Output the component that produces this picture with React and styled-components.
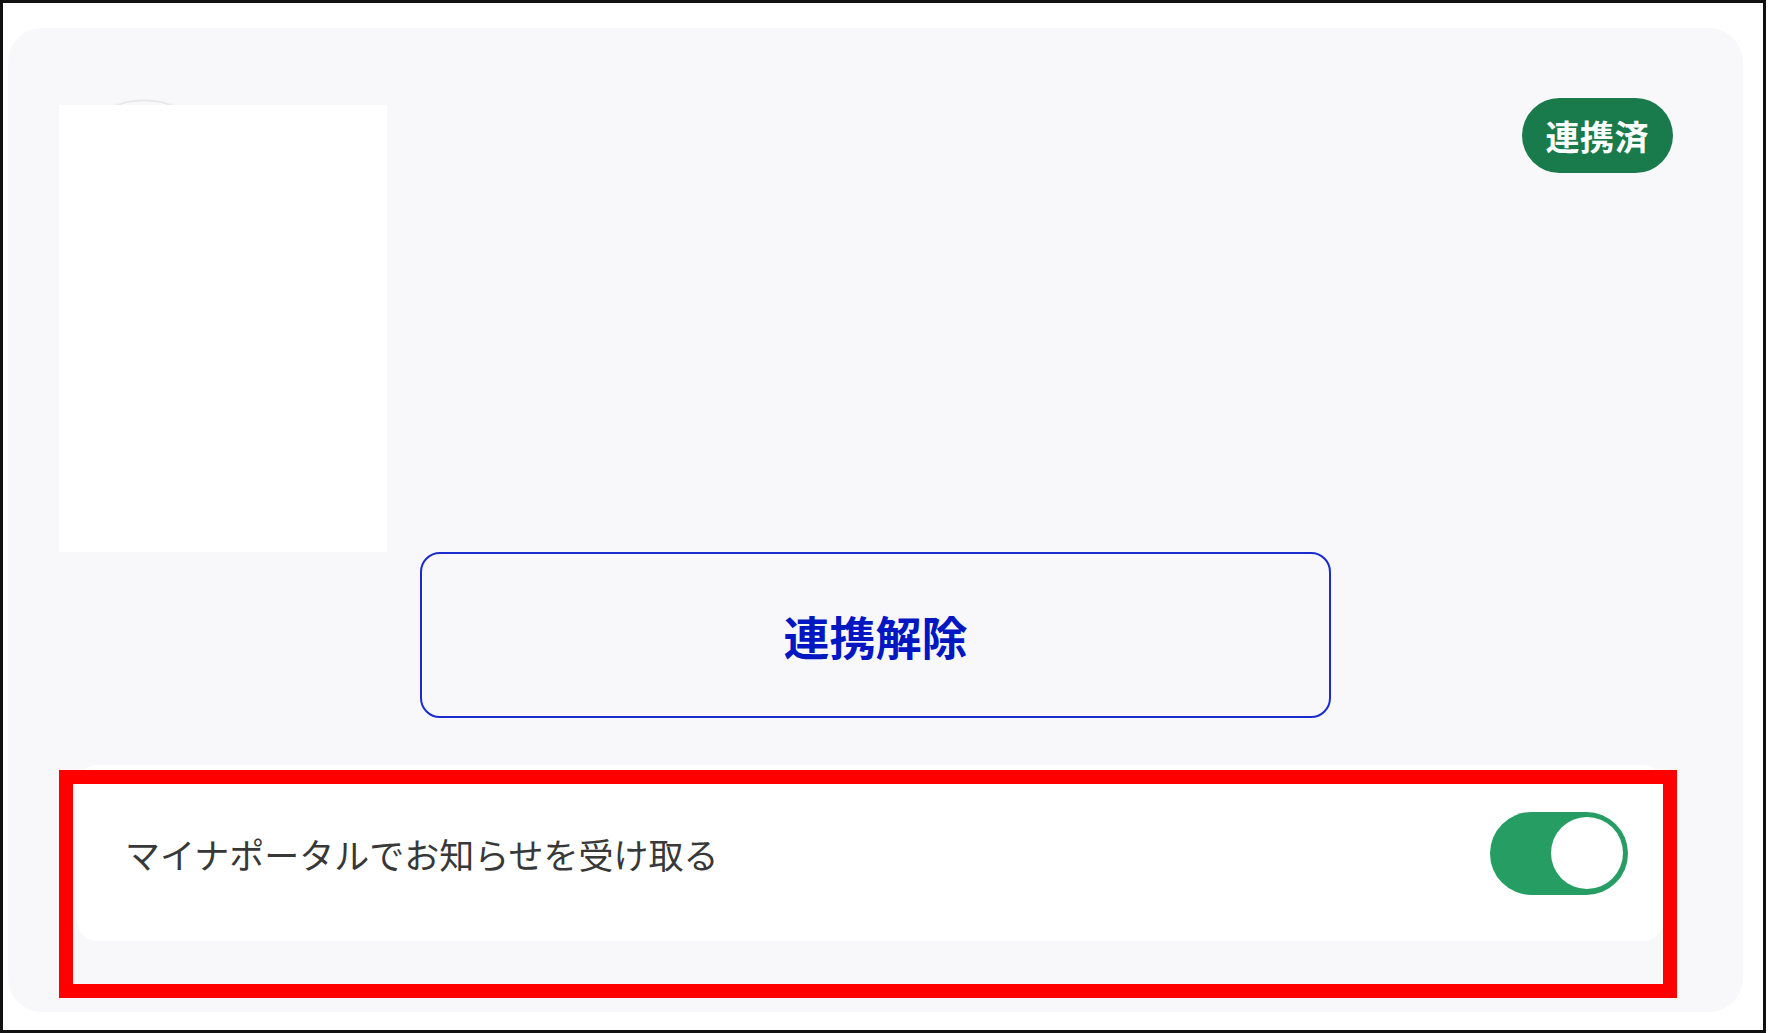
import styled, { createGlobalStyle } from 'styled-components'

const GlobalStyle = createGlobalStyle`
  html, body {
    margin: 0;
    padding: 0;
    background: #fff;
  }
  body {
    font-family: "Noto Sans CJK JP", "Noto Sans", sans-serif;
  }
`

function Toggle({ on }) {
  return (
    <ToggleTrack $on={on} role="switch" aria-checked={on}>
      <ToggleKnob $on={on} />
    </ToggleTrack>
  )
}

function App() {
  return (
    <>
      <GlobalStyle />
      <Frame>
        <Card>
          <Header>
            <Photo>
              <AvatarRing />
              <Redaction />
            </Photo>
            <Badge>連携済</Badge>
          </Header>
          <UnlinkButton type="button">連携解除</UnlinkButton>
          <SettingRow>
            <SettingLabel>マイナポータルでお知らせを受け取る</SettingLabel>
            <Toggle on />
          </SettingRow>
          <Highlight />
        </Card>
      </Frame>
    </>
  )
}

const Frame = styled.div`
  box-sizing: border-box;
  width: 1766px;
  height: 1033px;
  border: 3px solid #111;
  padding: 25px 20px 17px 5px;
`

const Card = styled.section`
  position: relative;
  box-sizing: border-box;
  height: 984px;
  background: #f8f8fb;
  border-radius: 34px;
  padding: 70px 0 71px;
  display: flex;
  flex-direction: column;
`

const Header = styled.div`
  display: flex;
  justify-content: space-between;
  align-items: flex-start;
  padding: 0 70px 0 51px;
`

const Photo = styled.div`
  position: relative;
  width: 328px;
  height: 447px;
  margin-top: 7px;
`

const AvatarRing = styled.div`
  position: absolute;
  left: 5px;
  top: -4px;
  width: 160px;
  height: 160px;
  border-radius: 50%;
  background: #f8f8fb;
  box-shadow: 0 0 3px rgba(0, 0, 0, 0.22);
`

const Redaction = styled.div`
  position: absolute;
  inset: 0;
  background: #fff;
`

const Badge = styled.span`
  display: inline-flex;
  align-items: center;
  justify-content: center;
  height: 75px;
  padding: 0 24px;
  border-radius: 38px;
  background: #197a4b;
  color: #fff;
  font-size: 34px;
  font-weight: 700;
  letter-spacing: 0.5px;
`

const UnlinkButton = styled.button`
  box-sizing: border-box;
  align-self: center;
  width: 911px;
  height: 166px;
  margin: 0;
  border: 2px solid #1a2cd0;
  border-radius: 20px;
  background: #f8f8fb;
  color: #0017c1;
  font-family: "Noto Sans CJK JP", "Noto Sans", sans-serif;
  font-size: 46px;
  font-weight: 700;
  cursor: pointer;
`

const SettingRow = styled.div`
  display: flex;
  align-items: center;
  justify-content: space-between;
  height: 176px;
  margin: 47px 80px 0 69px;
  padding: 0 35px 0 48px;
  background: #fff;
  border-radius: 20px;
`

const SettingLabel = styled.span`
  color: #383838;
  font-size: 35px;
  font-weight: 400;
`

const ToggleTrack = styled.div`
  position: relative;
  box-sizing: border-box;
  width: 138px;
  height: 83px;
  border-radius: 42px;
  background: ${(p) => (p.$on ? '#259d63' : '#ccc')};
`

const ToggleKnob = styled.span`
  position: absolute;
  top: 5.5px;
  left: ${(p) => (p.$on ? '61px' : '5px')};
  width: 72px;
  height: 72px;
  border-radius: 50%;
  background: #fff;
`

const Highlight = styled.div`
  position: absolute;
  left: 51px;
  top: 742px;
  width: 1618px;
  height: 228px;
  box-sizing: border-box;
  border: 14px solid #ff0000;
  pointer-events: none;
`

export default App
